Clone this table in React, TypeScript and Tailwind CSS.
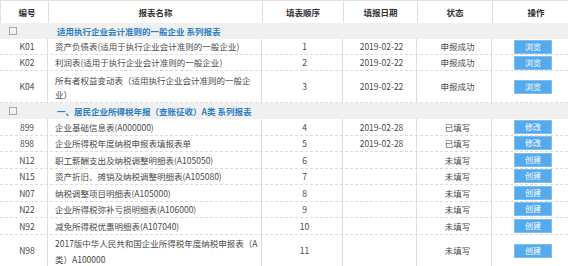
import React from "react";

type Row = {
  code: string;
  name: React.ReactNode;
  seq: string;
  date: string;
  status: string;
  action: string;
  h: string;
};

const COLS = "grid grid-cols-[48px_214px_81px_74px_75px_76px]";
const V = "border-r border-[#dedede]";

const group1: Row[] = [
  { code: "K01", name: "资产负债表(适用于执行企业会计准则的一般企业)", seq: "1", date: "2019-02-22", status: "申报成功", action: "浏览", h: "h-[16px]" },
  { code: "K02", name: "利润表(适用于执行企业会计准则的一般企业)", seq: "2", date: "2019-02-22", status: "申报成功", action: "浏览", h: "h-[16px]" },
  {
    code: "K04",
    name: (
      <span className="block leading-[14px]">
        <span className="block whitespace-nowrap">所有者权益变动表（适用执行企业会计准则的一般企</span>
        <span className="block whitespace-nowrap">业）</span>
      </span>
    ),
    seq: "3",
    date: "2019-02-22",
    status: "申报成功",
    action: "浏览",
    h: "h-[32px]",
  },
];

const group2: Row[] = [
  { code: "899", name: "企业基础信息表(A000000)", seq: "4", date: "2019-02-28", status: "已填写", action: "修改", h: "h-[16.5px]" },
  { code: "898", name: "企业所得税年度纳税申报表填报表单", seq: "5", date: "2019-02-28", status: "已填写", action: "修改", h: "h-[16.5px]" },
  { code: "N12", name: "职工薪酬支出及纳税调整明细表(A105050)", seq: "6", date: "", status: "未填写", action: "创建", h: "h-[16.5px]" },
  { code: "N15", name: "资产折旧、摊销及纳税调整明细表(A105080)", seq: "7", date: "", status: "未填写", action: "创建", h: "h-[16.5px]" },
  { code: "N07", name: "纳税调整项目明细表(A105000)", seq: "8", date: "", status: "未填写", action: "创建", h: "h-[16.5px]" },
  { code: "N22", name: "企业所得税弥补亏损明细表(A106000)", seq: "9", date: "", status: "未填写", action: "创建", h: "h-[16.5px]" },
  { code: "N92", name: "减免所得税优惠明细表(A107040)", seq: "10", date: "", status: "未填写", action: "创建", h: "h-[16.5px]" },
  {
    code: "N98",
    name: (
      <span className="block leading-[16px]">
        <span className="block whitespace-nowrap">2017版中华人民共和国企业所得税年度纳税申报表（A</span>
        <span className="block whitespace-nowrap">类）A100000</span>
      </span>
    ),
    seq: "11",
    date: "",
    status: "未填写",
    action: "创建",
    h: "h-[33px]",
  },
];

function DataRow({ r }: { r: Row }) {
  return (
    <div className={`${COLS} ${r.h} border-b border-dashed border-[#dcdcdc] text-[#4a4a4a]`}>
      <div className={`${V} flex items-center justify-center pl-[7px]`}>{r.code}</div>
      <div className={`${V} flex items-center pl-[7px] whitespace-nowrap`}>{r.name}</div>
      <div className={`${V} flex items-center justify-center pl-[5px]`}>{r.seq}</div>
      <div className={`${V} flex items-center justify-center pl-[4px]`}>{r.date}</div>
      <div className={`${V} flex items-center justify-center pl-[7px]`}>{r.status}</div>
      <div className="flex items-center justify-center pl-[6px]">
        <div className="w-[38px] h-[14px] bg-[#55aaee] border border-[#7cc0f3] text-white flex items-center justify-center text-[8px]">
          {r.action}
        </div>
      </div>
    </div>
  );
}

function GroupRow({ title }: { title: string }) {
  return (
    <div className="flex items-center h-[16px] bg-[#f0f0f0]">
      <div className="w-[48px] pl-[9px] flex items-center">
        <div className="w-[8px] h-[8px] border border-[#a8a8a8] bg-[#f4f4f4]" />
      </div>
      <div className="pl-[9px] font-bold text-[#2e7fc2] whitespace-nowrap">{title}</div>
    </div>
  );
}

export default function App() {
  return (
    <div
      className="w-[568px] h-[266px] overflow-hidden bg-white text-[8.5px] leading-none"
      style={{ fontFamily: '"Noto Sans CJK SC", "Noto Sans", sans-serif' }}
    >
      <div className={`${COLS} h-[23px] border-t border-l border-[#e2e2e2] font-bold text-[#333]`}>
        <div className={`${V} flex items-center justify-center pl-[5px]`}>编号</div>
        <div className={`${V} flex items-center justify-center`}>报表名称</div>
        <div className={`${V} flex items-center justify-center`}>填表顺序</div>
        <div className={`${V} flex items-center justify-center`}>填报日期</div>
        <div className={`${V} flex items-center justify-center`}>状态</div>
        <div className="flex items-center justify-center pl-[10px]">操作</div>
      </div>
      <GroupRow title="适用执行企业会计准则的一般企业  系列报表" />
      {group1.map((r) => (
        <DataRow key={r.code} r={r} />
      ))}
      <GroupRow title="一、居民企业所得税年报（查账征收）A类  系列报表" />
      {group2.map((r) => (
        <DataRow key={r.code} r={r} />
      ))}
    </div>
  );
}
